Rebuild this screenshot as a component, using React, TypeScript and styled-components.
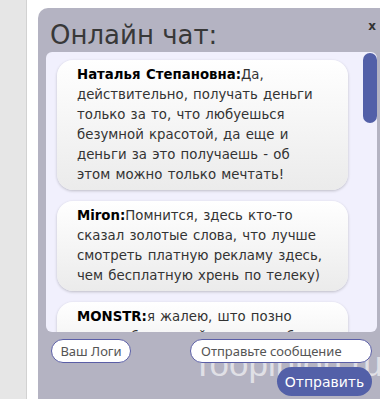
import React from "react";
import styled, { createGlobalStyle } from "styled-components";

const Global = createGlobalStyle`
  html, body { margin: 0; padding: 0; }
  body { width: 380px; height: 399px; overflow: hidden; background: #fff; font-family: "DejaVu Sans", Verdana, sans-serif; }
`;

const Page = styled.div`
  display: flex;
  height: 399px;
`;

const Gutter = styled.div`
  width: 26px;
  background: #e6e6e6;
  border-right: 1px solid #d2d2d2;
`;

const Spacer = styled.div`
  width: 11px;
  background: #fff;
`;

const Panel = styled.div`
  position: relative;
  flex: 1;
  margin-top: 8px;
  padding: 0 3px 0 8px;
  background: #b4b3c2;
  border-top-left-radius: 10px;
  display: flex;
  flex-direction: column;
`;

const Title = styled.h1`
  margin: 0;
  padding: 12px 0 2px 4px;
  font-family: "DejaVu Sans", Verdana, sans-serif;
  font-weight: normal;
  font-size: 26px;
  line-height: 30px;
  color: #383838;
`;

const Close = styled.span`
  position: absolute;
  top: 11px;
  right: 4px;
  font-family: "DejaVu Sans", Verdana, sans-serif;
  font-weight: bold;
  font-size: 12px;
  color: #333;
`;

const Messages = styled.div`
  position: relative;
  height: 280px;
  background: #f1f0fd;
  border-radius: 6px;
  overflow: hidden;
`;

const List = styled.div`
  display: flex;
  flex-direction: column;
  gap: 11px;
  padding: 8px 29px 8px 11px;
`;

const Bubble = styled.div`
  padding: 5px 23px 5px 20px;
  border-radius: 16px;
  background: linear-gradient(#ffffff, #ebebeb);
  box-shadow: 0 1px 3px rgba(0, 0, 0, 0.22);
  font-size: 13.3px;
  line-height: 20px;
  word-spacing: 1px;
  color: #333;
`;

const Name = styled.b`
  color: #000;
`;

const Thumb = styled.div`
  position: absolute;
  top: 1px;
  right: 0;
  width: 14px;
  height: 70px;
  border-radius: 7px;
  background: #5360a8;
`;

const Footer = styled.div`
  position: relative;
  display: flex;
  flex-direction: column;
  padding: 7px 5px 0 5px;
  gap: 4px;
`;

const Row = styled.div<{ $end?: boolean }>`
  position: relative;
  z-index: 1;
  display: flex;
  justify-content: ${(p) => (p.$end ? "flex-end" : "space-between")};
`;

const Pill = styled.button`
  width: 80px;
  height: 24px;
  padding: 0;
  background: #fff;
  border: 1px solid #5a5ea6;
  border-radius: 12px;
  font-family: "Noto Sans", "Open Sans", sans-serif;
  font-size: 13px;
  color: #555;
`;

const Input = styled.input`
  box-sizing: border-box;
  width: 182px;
  height: 24px;
  padding: 0 10px;
  background: #fff;
  border: 1px solid #5a5ea6;
  border-radius: 12px;
  font-family: "Noto Sans", "Open Sans", sans-serif;
  font-size: 13px;
  outline: none;
  &::placeholder { color: #555; }
`;

const Send = styled.button`
  width: 95px;
  height: 29px;
  padding: 0;
  border: none;
  border-radius: 15px;
  background: #5360a8;
  color: #fff;
  font-family: "DejaVu Sans", Verdana, sans-serif;
  font-size: 14px;
`;

const Watermark = styled.div`
  position: absolute;
  left: 146px;
  top: 12px;
  font-family: "Liberation Sans", Arial, sans-serif;
  font-size: 35px;
  color: rgba(255, 255, 255, 0.6);
  white-space: nowrap;
  z-index: 0;
`;

const messages = [
  {
    name: "Наталья Степановна:",
    text: "Да, действительно, получать деньги только за то, что любуешься безумной красотой, да еще и деньги за это получаешь - об этом можно только мечтать!",
  },
  {
    name: "Miron:",
    text: "Помнится, здесь кто-то сказал золотые слова, что лучше смотреть платную рекламу здесь, чем бесплатную хрень по телеку)",
  },
  {
    name: "MONSTR:",
    text: "я жалею, што позно узнал об этом сайте, теперь буду тут каждый день",
  },
];

export default function App() {
  return (
    <>
      <Global />
      <Page>
        <Gutter />
        <Spacer />
        <Panel>
          <Title>Онлайн чат:</Title>
          <Close>x</Close>
          <Messages>
            <List>
              {messages.map((m) => (
                <Bubble key={m.name}>
                  <Name>{m.name}</Name>
                  {m.text}
                </Bubble>
              ))}
            </List>
            <Thumb />
          </Messages>
          <Footer>
            <Watermark>Toopinion.ru</Watermark>
            <Row>
              <Pill>Ваш Логи</Pill>
              <Input placeholder="Отправьте сообщение" />
            </Row>
            <Row $end>
              <Send>Отправить</Send>
            </Row>
          </Footer>
        </Panel>
      </Page>
    </>
  );
}
